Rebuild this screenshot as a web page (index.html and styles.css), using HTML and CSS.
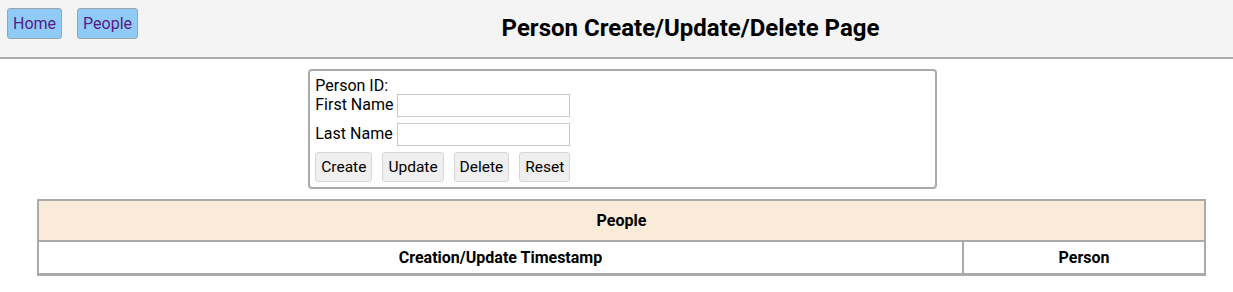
FILE: index.html
```html
<!DOCTYPE html>
<html lang="en">

<head>
  <meta charset="UTF-8">
  <meta name="viewport" content="width=device-width, initial-scale=1.0">
  <title>Person Create/Update/Delete Page</title>
  <link rel="stylesheet" href="styles.css">
</head>

<body>
  <div id="header">
    <a class="navlink" href="#home">Home</a>
    <a class="navlink" href="#people">People</a>
    <h1 id="title">Person Create/Update/Delete Page</h1>
  </div>

  <div id="editor">
    <div class="row">Person ID:</div>
    <div class="row field">
      <label for="first">First Name</label>
      <input id="first" type="text">
    </div>
    <div class="row field">
      <label for="last">Last Name</label>
      <input id="last" type="text">
    </div>
    <div class="row buttons">
      <button>Create</button>
      <button>Update</button>
      <button>Delete</button>
      <button>Reset</button>
    </div>
  </div>

  <table id="people">
    <tr>
      <th colspan="2" class="caption">People</th>
    </tr>
    <tr>
      <th>Creation/Update Timestamp</th>
      <th class="person">Person</th>
    </tr>
  </table>
</body>

</html>
```

FILE: styles.css
```css
* {
  margin: 0;
  padding: 0;
}

body {
  font-family: Roboto, "Liberation Sans", sans-serif;
  font-size: 16px;
  color: #000;
}

#header {
  display: flex;
  align-items: flex-start;
  height: 49px;
  padding: 8px 0 0 7px;
  background-color: #f4f4f4;
  border-bottom: 2px solid #aaa;
}

.navlink {
  display: inline-block;
  padding: 5px 5px 5px 5px;
  margin-right: 15px;
  line-height: 19px;
  color: #551a8b;
  text-decoration: none;
  background-color: #90cbf8;
  border: 1px solid #9aa4ad;
  border-radius: 3px;
}

#title {
  flex: 1;
  margin: 6px 0 0 -5px;
  font-size: 24px;
  line-height: 28px;
  text-align: center;
}

#editor {
  width: 50%;
  margin: 10px 0 0 25%;
  padding: 5px 3px 5px 5px;
  border: 2px solid #aaa;
  border-radius: 4px;
}

.row {
  line-height: 19px;
}

.field {
  margin-top: 6px;
}

.row:nth-child(2) {
  margin-top: -1px;
}

.field input {
  width: 173px;
  height: 23px;
  box-sizing: border-box;
  border: 1px solid #c8c8c8;
  vertical-align: middle;
  font-size: 14px;
}

.buttons {
  display: flex;
  gap: 10px;
  margin-top: 6px;
}

.buttons button {
  height: 30px;
  padding: 0 5px;
  font-family: Roboto, "Liberation Sans", sans-serif;
  font-size: 15.5px;
  color: #000;
  background-color: #efefef;
  border: 1px solid #d6d6d6;
  border-radius: 3px;
}

#people {
  width: 1169px;
  margin: 10px 0 0 37px;
  border-collapse: collapse;
  border: 2px solid #aaa;
  border-bottom-width: 3px;
}

#people th {
  border: 2px solid #aaa;
  height: 31px;
  padding: 0 10px;
  font-size: 16px;
}

#people th.caption {
  height: 39px;
  background-color: #faebd8;
}

#people th.person {
  width: 220px;
}

#people tr:last-child th {
  border-bottom-width: 3px;
}
```
